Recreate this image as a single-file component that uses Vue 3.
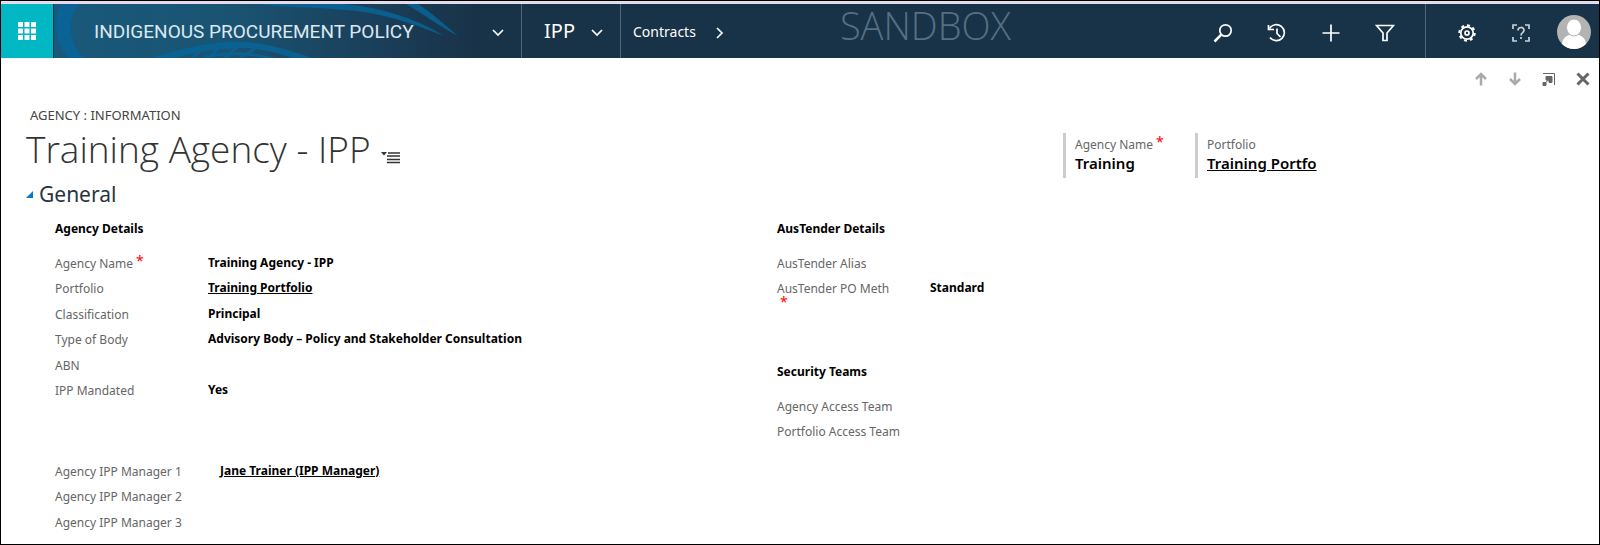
<template>
  <div class="page">
    <header class="navbar">
      <button class="nav-tile" aria-label="Apps">
        <svg width="18" height="18" viewBox="0 0 18 18">
          <rect v-for="d in dots" :key="d.x + '-' + d.y" :x="d.x" :y="d.y" width="5" height="5" />
        </svg>
      </button>

      <div class="brand">
        <svg class="brand-art" viewBox="0 0 427 54" preserveAspectRatio="none">
          <path d="M6 0 H26 C14 12 12 36 30 54 H14 C0 38 0 16 6 0 Z" />
          <path d="M205 0 H290 C325 3 362 14 390 32 C355 18 325 8 290 6 C260 3 230 4 205 0 Z" />
          <path d="M352 0 H364 C378 9 390 20 404 32 C386 23 370 10 352 0 Z" />
          <path d="M98 54 C130 43 165 36 192 38 C215 40 235 46 258 54 H238 C222 48 205 44 188 44 C165 44 140 48 122 54 Z" />
          <path d="M138 54 L150 44 M155 54 L167 42 M171 54 L184 42 M186 54 L202 44" class="hatch" />
          <path d="M150 53 C170 49 195 48 220 55" class="hatch" />
        </svg>
        <span class="brand-name">INDIGENOUS PROCUREMENT POLICY</span>
      </div>
      <button class="nav-chevron" aria-label="Work areas">
        <svg width="12" height="8" viewBox="0 0 12 8"><path d="M1 1 L6 6 L11 1" /></svg>
      </button>

      <button class="nav-area">
        <span>IPP</span>
        <svg width="12" height="8" viewBox="0 0 12 8"><path d="M1 1 L6 6 L11 1" /></svg>
      </button>
      <a class="nav-crumb" href="#">
        <span>Contracts</span>
        <svg width="8" height="12" viewBox="0 0 8 12"><path d="M1 1 L6 6 L1 11" /></svg>
      </a>

      <span class="env-name">SANDBOX</span>

      <div class="nav-tools">
        <button class="tool" aria-label="Search">
          <svg width="20" height="20" viewBox="0 0 20 20">
            <circle cx="12.5" cy="7.5" r="5.7" />
            <path d="M8.3 11.7 L1.5 18.5" class="bold" />
          </svg>
        </button>
        <button class="tool" aria-label="Recent">
          <svg width="20" height="20" viewBox="0 0 20 20">
            <path d="M2.5 5.5 A8 8 0 1 1 3 14.5" />
            <path d="M1.5 2 V6.5 H7" />
            <path d="M10 5.5 V10.5 L13.5 14" />
          </svg>
        </button>
        <button class="tool" aria-label="New">
          <svg width="20" height="20" viewBox="0 0 20 20"><path d="M10 1.5 V18.5 M1.5 10 H18.5" /></svg>
        </button>
        <button class="tool" aria-label="Advanced find">
          <svg width="20" height="20" viewBox="0 0 20 20">
            <path d="M1.5 2.5 H18.5 L12 10 V17.5 H8 V10 Z" />
          </svg>
        </button>
      </div>
      <div class="nav-user">
        <button class="tool" aria-label="Settings">
          <svg width="20" height="20" viewBox="0 0 20 20">
            <circle cx="10" cy="10" r="6.2" />
            <circle cx="10" cy="10" r="7.7" class="teeth" />
            <circle cx="10" cy="10" r="2" />
          </svg>
        </button>
        <button class="tool" aria-label="Help">
          <svg width="20" height="20" viewBox="0 0 20 20" class="soft">
            <path d="M2 6 V2 H6 M14 2 H18 V6 M18 14 V18 H14 M6 18 H2 V14" />
            <path d="M7 7.5 C7 3.5 13 3.5 13 7.3 C13 9.8 10 9.5 10 12.5 M10 14 V16" />
          </svg>
        </button>
        <button class="avatar" aria-label="Account">
          <svg width="34" height="34" viewBox="0 0 34 34">
            <circle cx="17" cy="17" r="17" fill="#b3b3b3" />
            <path d="M5 29 C6 22 10 19.5 17 19.5 C24 19.5 28 22 29 29 A17 17 0 0 1 5 29 Z" fill="#fff" />
            <ellipse cx="17" cy="12.5" rx="7.5" ry="8.5" fill="#fff" stroke="#b3b3b3" />
          </svg>
        </button>
      </div>
    </header>

    <div class="record-actions">
      <button aria-label="Previous record">
        <svg width="14" height="14" viewBox="0 0 14 14" class="dim"><path d="M7 13.5 V2 M2 7 L7 2 L12 7" /></svg>
      </button>
      <button aria-label="Next record">
        <svg width="14" height="14" viewBox="0 0 14 14" class="dim"><path d="M7 0.5 V12 M2 7 L7 12 L12 7" /></svg>
      </button>
      <button aria-label="Pop out">
        <svg width="14" height="14" viewBox="0 0 14 14" class="popout">
          <path d="M1 1.5 H12.5 V13" />
          <path d="M4 4.5 H10 V10.5 H7 V8 H4 Z M1 10.5 H4 V13.5 H1 Z" class="fill" />
          <path d="M2 12 L7 7.5" />
        </svg>
      </button>
      <button aria-label="Close">
        <svg width="14" height="14" viewBox="0 0 14 14" class="close"><path d="M1.5 1.5 L12.5 12.5 M12.5 1.5 L1.5 12.5" /></svg>
      </button>
    </div>

    <section class="record-head">
      <div>
        <div class="record-type">AGENCY : INFORMATION</div>
        <div class="record-title">
          <h1>Training Agency - IPP</h1>
          <button aria-label="Switch form">
            <svg width="20" height="13" viewBox="0 0 20 13">
              <path d="M0 1 H6 L3 4.5 Z" fill="#333" />
              <path d="M7 2 H19 M6 5 H19 M6 8.5 H19 M6 11.5 H19" stroke="#333" stroke-width="1.6" />
            </svg>
          </button>
        </div>
      </div>
      <dl class="head-fields">
        <div class="head-field">
          <dt>Agency Name<span class="req">*</span></dt>
          <dd>Training</dd>
        </div>
        <div class="head-field">
          <dt>Portfolio</dt>
          <dd><a href="#">Training Portfo</a></dd>
        </div>
      </dl>
    </section>

    <h2 class="tab-title">
      <svg width="7" height="7" viewBox="0 0 7 7"><path d="M7 0 V7 H0 Z" fill="#0f75c8" /></svg>
      General
    </h2>

    <main class="form">
      <div v-for="(column, c) in columns" :key="c" class="form-col">
        <section v-for="(section, s) in column" :key="s" class="form-section" :class="section.kind">
          <h3 v-if="section.title">{{ section.title }}</h3>
          <dl>
            <div v-for="field in section.fields" :key="field.label" class="field">
              <dt>{{ field.label }}<span v-if="field.required" class="req">*</span></dt>
              <dd>
                <a v-if="field.link" href="#">{{ field.value }}</a>
                <template v-else>{{ field.value }}</template>
              </dd>
            </div>
          </dl>
        </section>
      </div>
    </main>
  </div>
</template>

<script setup>
const dots = [0, 6.5, 13].flatMap(y => [0, 6.5, 13].map(x => ({ x, y })))

const columns = [
  [
    {
      title: 'Agency Details',
      kind: 'agency',
      fields: [
        { label: 'Agency Name', value: 'Training Agency - IPP', required: true },
        { label: 'Portfolio', value: 'Training Portfolio', link: true },
        { label: 'Classification', value: 'Principal' },
        { label: 'Type of Body', value: 'Advisory Body – Policy and Stakeholder Consultation' },
        { label: 'ABN', value: '' },
        { label: 'IPP Mandated', value: 'Yes' },
      ],
    },
    {
      kind: 'managers',
      fields: [
        { label: 'Agency IPP Manager 1', value: 'Jane Trainer (IPP Manager)', link: true },
        { label: 'Agency IPP Manager 2', value: '' },
        { label: 'Agency IPP Manager 3', value: '' },
      ],
    },
  ],
  [
    {
      title: 'AusTender Details',
      kind: 'austender',
      fields: [
        { label: 'AusTender Alias', value: '' },
        { label: 'AusTender PO Meth', value: 'Standard', required: true },
      ],
    },
    {
      title: 'Security Teams',
      fields: [
        { label: 'Agency Access Team', value: '' },
        { label: 'Portfolio Access Team', value: '' },
      ],
    },
  ],
]
</script>

<style>
body { margin: 0; background: #fff; }
</style>

<style scoped>
.page {
  box-sizing: border-box;
  min-height: 100vh;
  border: 1px solid #000;
  font-family: "Noto Sans", "Open Sans", sans-serif;
  font-size: 12px;
  line-height: 16px;
  color: #000;
}

h1, h2, h3, dl, dd { margin: 0; }

button {
  padding: 0;
  border: 0;
  background: none;
  font: inherit;
  color: inherit;
}

svg { display: block; }

a { color: inherit; }

/* top bar */
.navbar {
  display: flex;
  height: 54px;
  border-top: 3px solid #e4dcec;
  background: #183247;
  color: #fff;
}

.navbar button,
.nav-crumb {
  display: flex;
  align-items: center;
  padding-top: 3px;
}

.navbar path,
.navbar circle {
  stroke-width: 1.7;
}

.navbar .nav-tile {
  width: 53px;
  padding: 0;
  justify-content: center;
  border-right: 1px solid #183247;
  background: #00b7c3;
}

.nav-tile svg { fill: #fff; }

.brand {
  position: relative;
  display: flex;
  align-items: center;
  width: 427px;
  padding: 2px 0 0 40px;
  box-sizing: border-box;
  background: linear-gradient(90deg, #19597a 0%, #1a5473 40%, #1a3f5a 75%, #183247 100%);
}

.brand-art {
  position: absolute;
  inset: 0;
  width: 100%;
  height: 100%;
  fill: #086599;
  opacity: 0.85;
}

.brand-art .hatch {
  fill: none;
  stroke: #086599;
  stroke-width: 3;
}

.brand-name {
  position: relative;
  font-family: Roboto, sans-serif;
  font-size: 19px;
  line-height: 24px;
  white-space: nowrap;
  color: #dce8f0;
}

.navbar .nav-chevron,
.navbar .nav-area {
  border-right: 1px solid #506577;
}

.navbar .nav-chevron { width: 41px; padding-left: 11px; }
.navbar .nav-area { width: 99px; gap: 16px; padding-left: 22px; }

.nav-area span {
  font-size: 20px;
  line-height: 28px;
  padding-bottom: 3px;
}

.nav-crumb {
  gap: 20px;
  padding-left: 12px;
  font-size: 14px;
  line-height: 20px;
  text-decoration: none;
}

.nav-crumb span { padding-bottom: 2px; }

.nav-chevron svg,
.nav-area svg,
.nav-crumb svg {
  fill: none;
  stroke: #fff;
}

.env-name {
  padding-left: 116px;
  font-family: "Open Sans", sans-serif;
  font-size: 38px;
  font-weight: 300;
  line-height: 42px;
  color: #566f83;
}

.nav-tools {
  display: flex;
  margin-left: auto;
  padding-right: 13px;
  border-right: 1px solid #506577;
}

.nav-user {
  display: flex;
  padding-left: 14px;
}

.tool {
  width: 54px;
  justify-content: center;
}

.tool svg {
  fill: none;
  stroke: #fff;
}

.tool .soft { stroke: #c9d3da; }

.navbar .bold { stroke-width: 2.5; }
.navbar .teeth { stroke-width: 2; stroke-dasharray: 3 3; }

.navbar .avatar {
  width: 51px;
  padding-top: 1px;
  justify-content: center;
}

/* record toolbar */
.record-actions {
  display: flex;
  justify-content: flex-end;
  gap: 20px;
  padding: 14px 9px 0 0;
}

.record-actions svg {
  fill: none;
  stroke: #666;
  stroke-width: 2;
}

.record-actions .dim { stroke: #aaa; stroke-width: 2.5; }
.record-actions .close { stroke-width: 3; }
.record-actions .popout { stroke-width: 1; }
.record-actions .fill { fill: #666; }

/* record header */
.record-head {
  display: flex;
  justify-content: space-between;
  padding: 20px 272px 0 25px;
}

.record-type {
  padding-left: 4px;
  font-size: 13px;
  line-height: 18px;
  color: #444;
}

.record-title {
  display: flex;
  align-items: flex-end;
  gap: 10px;
}

.record-title h1 {
  font-family: "Open Sans", sans-serif;
  font-size: 37px;
  font-weight: 300;
  line-height: 50px;
  color: #333;
}

.record-title button { padding-bottom: 10px; }

.head-fields {
  display: flex;
  align-items: flex-start;
  padding-top: 27px;
}

.head-field {
  width: 132px;
  height: 45px;
  box-sizing: border-box;
  border-left: 3px solid #ccc;
  padding: 2px 0 0 9px;
  white-space: nowrap;
}

.head-field dt,
.field dt {
  display: flex;
  align-items: center;
  color: #666;
}

.head-field dt { line-height: 20px; }

.head-field dd {
  font-size: 15px;
  font-weight: 600;
  line-height: 16px;
}

.req {
  padding: 0 0 6px 3px;
  font-size: 14px;
  line-height: 2px;
  color: #f00;
}

.tab-title {
  display: flex;
  align-items: center;
  gap: 6px;
  padding-left: 25px;
  font-size: 21px;
  font-weight: 400;
  line-height: 32px;
  color: #2a3440;
}

/* form body */
.form {
  display: grid;
  grid-template-columns: 722px 1fr;
  padding: 11px 0 0 54px;
}

.form-section h3 {
  padding-bottom: 14px;
  font-size: 12px;
  font-weight: 700;
  line-height: 16px;
}

.form-section dl {
  display: grid;
  grid-auto-rows: 25px 26px;
}

.field {
  display: grid;
  grid-template-columns: 153px 1fr;
}

/* the marker drops under a label that fills its column */
.field dt {
  flex-wrap: wrap;
  align-content: flex-start;
  width: 116px;
  line-height: 25px;
  white-space: nowrap;
}

.field dd {
  font-weight: 700;
  line-height: 24px;
}

.managers .field { grid-template-columns: 165px 1fr; }
.managers .field dt { width: 140px; }
.agency { padding-bottom: 55px; }
.austender { padding-bottom: 62px; }
</style>
